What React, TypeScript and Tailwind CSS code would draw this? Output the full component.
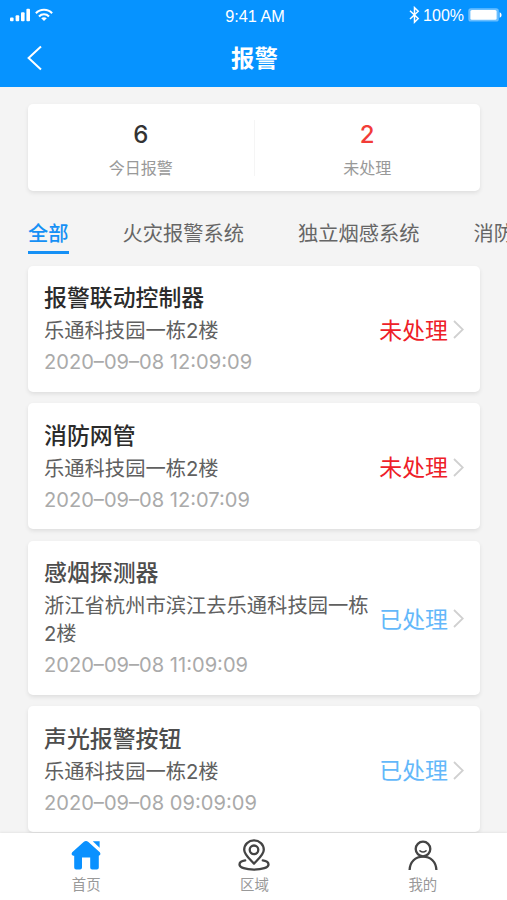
import React, { useState } from 'react';
import clsx from 'clsx';

interface Alarm {
  id: number;
  title: string;
  address: string;
  time: string;
  handled: boolean;
}

const ALARMS: Alarm[] = [
  { id: 1, title: '报警联动控制器', address: '乐通科技园一栋2楼', time: '2020–09–08 12:09:09', handled: false },
  { id: 2, title: '消防网管', address: '乐通科技园一栋2楼', time: '2020–09–08 12:07:09', handled: false },
  { id: 3, title: '感烟探测器', address: '浙江省杭州市滨江去乐通科技园一栋2楼', time: '2020–09–08 11:09:09', handled: true },
  { id: 4, title: '声光报警按钮', address: '乐通科技园一栋2楼', time: '2020–09–08 09:09:09', handled: true }
];

const TABS = ['全部', '火灾报警系统', '独立烟感系统', '消防'];

const StatusBar = () => (
  <div className="relative flex h-[30px] items-center justify-between pl-[10px] pr-[5px] font-['Liberation_Sans',sans-serif] text-[15.5px]">
    <div className="flex items-center gap-[6px]">
      <svg width="21" height="14" viewBox="0 0 21 14" fill="currentColor">
        <rect x="0" y="9.5" width="3.6" height="3.8" rx="1" />
        <rect x="5.6" y="7.2" width="3.6" height="6.1" rx="1" />
        <rect x="11" y="4.2" width="3.6" height="9.1" rx="1" />
        <rect x="16.4" y="0.8" width="3.6" height="12.5" rx="1" />
      </svg>
      <svg className="-ml-[2px]" width="18" height="14" viewBox="0 0 18 14" fill="none" stroke="currentColor" strokeWidth="2.1">
        <path d="M0.9 5.2C5.3 0.6 12.7 0.6 17.1 5.2" />
        <path d="M4 8.4C6.8 5.5 11.2 5.5 14 8.4" />
        <path d="M9 12.9L6.2 10.3C7.8 8.9 10.2 8.9 11.8 10.3Z" fill="currentColor" stroke="none" />
      </svg>
    </div>
    <span className="absolute inset-x-0 top-[4px] pl-[3px] text-center text-[16.3px] leading-6">9:41 AM</span>
    <div className="flex items-center">
      <svg width="11" height="18" viewBox="0 0 11 18" fill="none" stroke="currentColor" strokeWidth="1.5">
        <path d="M1 4.8L9.2 12.5L5.5 16.2V1.6L9.2 5.2L1 13" />
      </svg>
      <span className="ml-[3px] mt-[2px] text-[16px]">100%</span>
      <svg className="ml-[4px]" width="34" height="14" viewBox="0 0 34 14" fill="currentColor">
        <rect x="0.3" y="0.3" width="30.5" height="13.2" rx="2.6" opacity="0.4" />
        <rect x="2.4" y="2" width="26.2" height="9.8" rx="1.6" />
        <path d="M31.6 4.2C34.2 5 34.2 9 31.6 9.8Z" />
      </svg>
    </div>
  </div>
);

const Stat = ({ value, label, alert }: { value: number; label: string; alert?: boolean }) => (
  <div className="flex flex-1 flex-col items-center pt-[13px]">
    <span className={clsx('text-[24px] leading-[35px] font-medium', alert ? 'text-[#f23c38]' : 'text-[#333]')}>
      {value}
    </span>
    <span className="text-[16px] leading-[33px] text-[#999]">{label}</span>
  </div>
);

const AlarmCard = ({ alarm }: { alarm: Alarm }) => (
  <div className="flex items-center rounded-[5px] bg-white pt-[14.5px] pr-[16px] pb-[11.5px] pl-[16px] shadow-[0_2px_4px_rgba(0,0,0,0.09)]">
    <div className="w-[326px]">
      <h2
        className={clsx(
          'text-[22.9px] leading-[37px] font-medium',
          alarm.handled ? 'text-[#4d4d4d]' : 'text-[#2b2b2b]'
        )}
      >
        {alarm.title}
      </h2>
      <p className="text-[20.3px] leading-[28px] text-[#606060]">{alarm.address}</p>
      <p className="text-[20.1px] leading-[35px] text-[#aaa]">{alarm.time}</p>
    </div>
    <div className="ml-auto flex shrink-0 items-center gap-[5px]">
      <span className={clsx('pt-[2px] text-[22.9px]', alarm.handled ? 'text-[#63b8fa]' : 'text-[#ee2028]')}>
        {alarm.handled ? '已处理' : '未处理'}
      </span>
      <svg width="11" height="19" viewBox="0 0 11 19" fill="none" stroke="#d0d0d0" strokeWidth="1.8">
        <path d="M1 1L9.8 9.5L1 18" />
      </svg>
    </div>
  </div>
);

const HomeIcon = () => (
  <svg width="30" height="32" viewBox="0 0 30 32" fill="#0a91ff">
    <path d="M12.6 3Q15 1 17.4 3L28.8 13.2Q30.4 16 27.8 16.8V28.4Q27.8 30.4 25.8 30.4H21.2Q19.2 30.4 19.2 28.4V18.6H11V28.4Q11 30.4 9 30.4H5.2Q3.2 30.4 3.2 28.4V16.8H2.2Q-0.4 16 1.2 13.2Z" />
    <path d="M21.8 2.2H28.6V8.8Z" />
  </svg>
);

const AreaIcon = () => (
  <svg width="32" height="32" viewBox="0 0 32 32" fill="none" stroke="#444" strokeWidth="2.3" strokeLinecap="round">
    <path d="M16 24.6C11 19.4 6.2 15.6 6.2 10.8C6.2 5.4 10.6 1.4 16 1.4C21.4 1.4 25.8 5.4 25.8 10.8C25.8 15.6 21 19.4 16 24.6Z" strokeLinejoin="round" />
    <circle cx="16" cy="10.8" r="4.3" />
    <path d="M7.2 21.4C3.6 22 1.5 23.6 1.5 25.4C1.5 28.6 7.8 30.6 16 30.6C24.2 30.6 30.5 28.6 30.5 25.4C30.5 23.6 28.4 22 24.8 21.4" />
  </svg>
);

const MineIcon = () => (
  <svg width="30" height="32" viewBox="0 0 30 32" fill="none" stroke="#444" strokeWidth="2.3">
    <circle cx="15" cy="10" r="7.3" />
    <path d="M12 11.8Q15 14.2 18 11.8" strokeWidth="1.6" strokeLinecap="round" />
    <path d="M1.6 31C1.9 22.8 7.4 17.6 15 17.6C22.6 17.6 28.1 22.8 28.4 31" />
  </svg>
);

const NAV_ITEMS = [
  { label: '首页', icon: <HomeIcon /> },
  { label: '区域', icon: <AreaIcon /> },
  { label: '我的', icon: <MineIcon /> }
];

export default function App() {
  const [activeTab, setActiveTab] = useState(0);

  return (
    <div className="flex h-[900px] w-[507px] flex-col overflow-hidden bg-[#f4f4f4] font-['Inter','Noto_Sans_CJK_SC',sans-serif]">
      {/* Header */}
      <header className="h-[87px] shrink-0 bg-[#0693ff] text-white">
        <StatusBar />
        <div className="flex h-[57px] items-center px-[26px]">
          <button className="-mt-[2px] w-4">
            <svg width="16" height="26" viewBox="0 0 16 26" fill="none" stroke="currentColor" strokeWidth="2">
              <path d="M15 1.4L2.6 13L15 24.6" />
            </svg>
          </button>
          <h1 className="mr-[14px] flex-1 text-center text-[23.4px] font-bold">报警</h1>
        </div>
      </header>

      <main className="min-h-0 flex-1 overflow-hidden pt-[17px] pr-[27px] pl-[28px]">
        {/* Summary */}
        <section className="flex h-[87px] items-start rounded-[5px] bg-white shadow-[0_2px_4px_rgba(0,0,0,0.09)]">
          <Stat value={6} label="今日报警" />
          <div className="mt-[16px] h-[56px] w-px bg-[#f5f5f5]" />
          <Stat value={2} label="未处理" alert />
        </section>

        {/* Category tabs */}
        <nav className="mt-[22px] flex h-[42px] gap-[54px] whitespace-nowrap text-[20.25px] text-[#666]">
          {TABS.map((tab, idx) => (
            <button
              key={tab}
              onClick={() => setActiveTab(idx)}
              className={clsx(
                'h-[41px] shrink-0 border-b-3 leading-[41px]',
                idx === activeTab ? 'border-[#1590f5] font-medium text-[#1590f5]' : 'border-transparent'
              )}
            >
              {tab}
            </button>
          ))}
        </nav>

        <section className="mt-[10.5px] flex flex-col gap-[11.5px]">
          {ALARMS.map((alarm) => (
            <AlarmCard key={alarm.id} alarm={alarm} />
          ))}
        </section>
      </main>

      {/* Bottom navigation */}
      <footer className="flex h-[67px] shrink-0 bg-white pl-[2px] shadow-[0_-1px_2px_rgba(0,0,0,0.06)]">
        {NAV_ITEMS.map((item) => (
          <button key={item.label} className="flex flex-1 flex-col items-center pt-[6px]">
            {item.icon}
            <span className="mt-[3px] text-[14.4px] leading-[22px] text-[#999]">{item.label}</span>
          </button>
        ))}
      </footer>
    </div>
  );
}
